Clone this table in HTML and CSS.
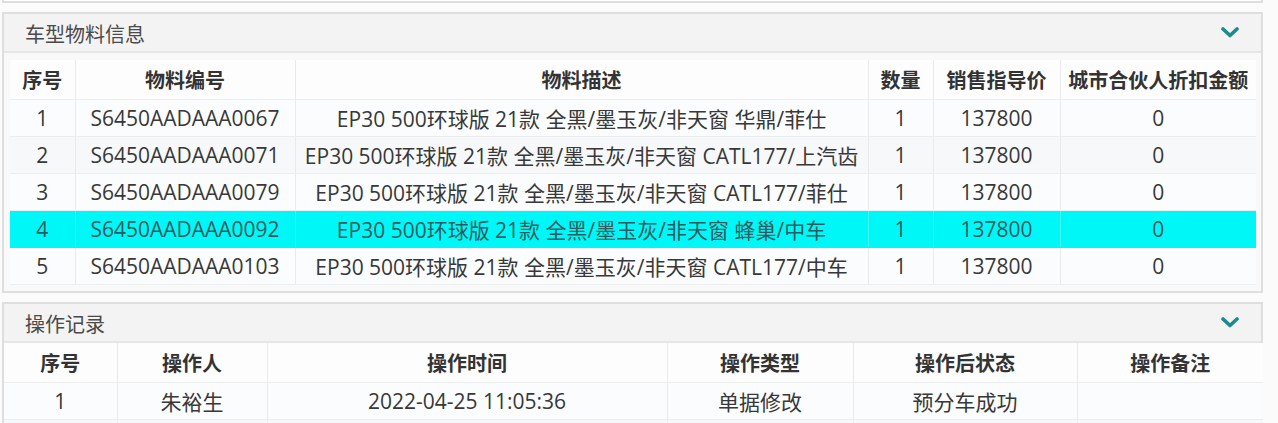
FILE: index.html
```html
<!DOCTYPE html>
<html lang="zh">
<head>
<meta charset="utf-8">
<link rel="stylesheet" href="styles.css">
</head>
<body>
<div class="page">
  <div class="stub"></div>

  <section class="panel">
    <div class="panel-head">
      <span class="panel-title">车型物料信息</span>
      <svg class="chev" width="18" height="11" viewBox="0 0 18 11"><polyline points="2,2 9,8.5 16,2" fill="none" stroke="#1b8b8b" stroke-width="3.6" stroke-linecap="round" stroke-linejoin="round"/></svg>
    </div>
    <div class="panel-body">
      <table class="grid grid-mat">
        <colgroup>
          <col style="width:65px"><col style="width:220px"><col style="width:573px"><col style="width:65px"><col style="width:127px"><col style="width:196px">
        </colgroup>
        <thead>
          <tr><th>序号</th><th>物料编号</th><th>物料描述</th><th>数量</th><th>销售指导价</th><th>城市合伙人折扣金额</th></tr>
        </thead>
        <tbody>
          <tr><td>1</td><td>S6450AADAAA0067</td><td>EP30 500环球版 21款 全黑/墨玉灰/非天窗 华鼎/菲仕</td><td>1</td><td>137800</td><td>0</td></tr>
          <tr class="alt"><td>2</td><td>S6450AADAAA0071</td><td>EP30 500环球版 21款 全黑/墨玉灰/非天窗 CATL177/上汽齿</td><td>1</td><td>137800</td><td>0</td></tr>
          <tr><td>3</td><td>S6450AADAAA0079</td><td>EP30 500环球版 21款 全黑/墨玉灰/非天窗 CATL177/菲仕</td><td>1</td><td>137800</td><td>0</td></tr>
          <tr class="sel"><td>4</td><td>S6450AADAAA0092</td><td>EP30 500环球版 21款 全黑/墨玉灰/非天窗 蜂巢/中车</td><td>1</td><td>137800</td><td>0</td></tr>
          <tr><td>5</td><td>S6450AADAAA0103</td><td>EP30 500环球版 21款 全黑/墨玉灰/非天窗 CATL177/中车</td><td>1</td><td>137800</td><td>0</td></tr>
        </tbody>
      </table>
    </div>
  </section>

  <section class="panel panel-log">
    <div class="panel-head">
      <span class="panel-title">操作记录</span>
      <svg class="chev" width="18" height="11" viewBox="0 0 18 11"><polyline points="2,2 9,8.5 16,2" fill="none" stroke="#1b8b8b" stroke-width="3.6" stroke-linecap="round" stroke-linejoin="round"/></svg>
    </div>
    <table class="grid grid-log">
      <colgroup>
        <col style="width:113px"><col style="width:150px"><col style="width:400px"><col style="width:186px"><col style="width:224px"><col style="width:186px">
      </colgroup>
      <thead>
        <tr><th>序号</th><th>操作人</th><th>操作时间</th><th>操作类型</th><th>操作后状态</th><th>操作备注</th></tr>
      </thead>
      <tbody>
        <tr><td>1</td><td>朱裕生</td><td>2022-04-25 11:05:36</td><td>单据修改</td><td>预分车成功</td><td></td></tr>
        <tr class="alt"><td></td><td></td><td></td><td></td><td></td><td></td></tr>
      </tbody>
    </table>
  </section>
</div>
</body>
</html>
```

FILE: styles.css
```css
html, body {
  margin: 0;
  padding: 0;
  background: #fbfbfb;
  font-family: "Open Sans", "Noto Sans CJK SC", sans-serif;
  color: #3a3a3a;
  overflow: hidden;
}

.page {
  width: 1261px;
  margin-left: 2px;
  display: flex;
  flex-direction: column;
  gap: 9px;
}

.stub {
  height: 1px;
  border: 2px solid #dedede;
  border-top: none;
  background: #fff;
}

.panel {
  border: 2px solid #dedede;
  background: #f7f7f7;
}

.panel-head {
  height: 37px;
  display: flex;
  align-items: center;
  justify-content: space-between;
  padding: 0 22px 0 21px;
  background: #f3f3f3;
  border-bottom: 2px solid #e6e6e6;
}

.panel-title {
  font-size: 20px;
  color: #4a4a4a;
  line-height: 1;
  margin-top: 4px;
}

.chev {
  display: block;
  margin-top: -1px;
}

.panel-body {
  padding: 7px 5px 6px 6px;
  background: #f9f9f9;
}

.grid {
  border-collapse: collapse;
  table-layout: fixed;
  font-size: 21px;
}

.grid-mat { width: 1246px; }
.grid-log { width: 1259px; }

.grid th,
.grid td {
  padding: 0;
  text-align: center;
  white-space: nowrap;
  overflow: hidden;
  border-left: 1px solid #e9eaec;
  border-bottom: 1px solid #ecedef;
}

.grid th:first-child,
.grid td:first-child { border-left: none; }

.grid th {
  height: 39px;
  font-weight: 700;
  color: #333;
  background: #fdfdfe;
  font-size: 20px;
}

.grid td {
  height: 36px;
  color: #383838;
  background: #fbfcfd;
}

.grid tr.alt td { background: #f7f8fa; }

.grid tr.sel td {
  background: #00f7f7;
  color: #2c5c60;
  border-bottom-color: #00f7f7;
  border-left-color: #3ff9f9;
}
```
